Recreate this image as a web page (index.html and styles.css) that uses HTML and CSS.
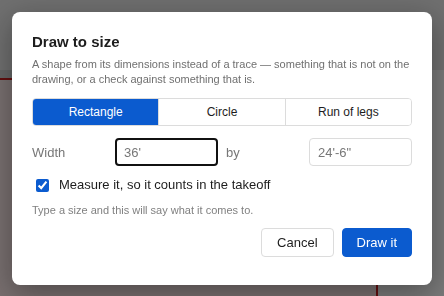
FILE: index.html
```html
<!DOCTYPE html>
<html>
<head>
<meta charset="UTF-8">
<title>Draw to size</title>
<link rel="stylesheet" href="styles.css">
</head>
<body>
	<!-- the takeoff page behind the dialog -->
	<div class="app">
		<div class="app-head"></div>
		<div class="app-body">
			<div class="work">
				<div class="toolbar"></div>
				<div class="sheet"></div>
			</div>
			<div class="side"></div>
		</div>
	</div>

	<div class="backdrop">
		<div class="dialog">
			<h1 class="title">Draw to size</h1>
			<p class="lead">A shape from its dimensions instead of a trace — something that is not on the drawing, or a check against something that is.</p>

			<div class="seg">
				<button class="seg-btn on">Rectangle</button>
				<button class="seg-btn">Circle</button>
				<button class="seg-btn">Run of legs</button>
			</div>

			<div class="dims">
				<label class="dim-label" for="w">Width</label>
				<input class="dim focus" id="w" value="36'">
				<label class="dim-label" for="h">by</label>
				<input class="dim" id="h" placeholder="24'-6&quot;">
			</div>

			<label class="check">
				<input type="checkbox" checked>
				<span>Measure it, so it counts in the takeoff</span>
			</label>

			<p class="hint">Type a size and this will say what it comes to.</p>

			<div class="actions">
				<button class="btn">Cancel</button>
				<button class="btn primary">Draw it</button>
			</div>
		</div>
	</div>
</body>
</html>
```

FILE: styles.css
```css
/* page behind the dialog */
html, body {
	margin: 0;
	height: 100%;
	overflow: hidden;
}

body {
	font-family: "Liberation Sans", Arial, sans-serif;
	background: #e4e4e4;
}

.app {
	height: 100%;
	display: flex;
	flex-direction: column;
}

.app-head {
	height: 70px;
	background: #dedede;
}

.app-body {
	flex: 1;
	display: flex;
}

.work {
	width: 378px;
	display: flex;
	flex-direction: column;
}

.toolbar {
	height: 8px;
	background: #c9cccc;
}

.sheet {
	flex: 1;
	background: #f0dede;
	border-top: 2px solid #c41e1e;
	border-right: 2px solid #c41e1e;
}

.side {
	flex: 1;
	background: #f2f2f2;
}

/* dialog */
.backdrop {
	position: fixed;
	inset: 0;
	background: rgba(0, 0, 0, 0.5);
	display: flex;
	align-items: flex-start;
	justify-content: center;
	padding-top: 12px;
}

.dialog {
	width: 380px;
	padding: 20px 20px 28px;
	background: white;
	border-radius: 8px;
	box-shadow: 0 8px 30px rgba(0, 0, 0, 0.35);
}

.title {
	margin: 0 0 5px;
	font-size: 15px;
	line-height: 20px;
	font-weight: bold;
	color: #1d1d1d;
}

.lead {
	margin: 0 0 11px;
	font-size: 11px;
	line-height: 15px;
	color: #707070;
}

.seg {
	display: flex;
	border: 1px solid #dcdcdc;
	border-radius: 4px;
	overflow: hidden;
}

.seg-btn {
	flex: 1;
	height: 26px;
	border: 0;
	border-left: 1px solid #dcdcdc;
	background: white;
	font-family: inherit;
	font-size: 12px;
	color: #1d1d1d;
	padding: 0;
}

.seg-btn:first-child {
	border-left: 0;
}

.seg-btn.on {
	background: #0b5bcf;
	color: white;
}

.dims {
	display: grid;
	grid-template-columns: 75px 1fr 75px 1fr;
	gap: 8px;
	align-items: center;
	margin-top: 12px;
}

.dim-label {
	font-size: 13px;
	color: #777;
}

.dim {
	box-sizing: border-box;
	width: 100%;
	height: 28px;
	padding: 0 8px;
	border: 1px solid #dcdcdc;
	border-radius: 4px;
	font-family: inherit;
	font-size: 13px;
	color: #777;
	outline: none;
}

.dim::placeholder {
	color: #777;
}

.dim.focus {
	border: 2px solid #111;
	padding: 0 7px;
}

.check {
	display: flex;
	align-items: center;
	gap: 10px;
	margin-top: 11px;
	padding-left: 4px;
	font-size: 13px;
	line-height: 16px;
	color: #1d1d1d;
}

.check input {
	margin: 0;
	width: 13px;
	height: 13px;
	accent-color: #0b5bcf;
}

.hint {
	margin: 10px 0 0;
	font-size: 11px;
	line-height: 15px;
	color: #808080;
}

.actions {
	display: flex;
	justify-content: flex-end;
	gap: 8px;
	margin-top: 10px;
}

.btn {
	height: 29px;
	padding: 0 15px;
	border: 1px solid #dcdcdc;
	border-radius: 4px;
	background: white;
	font-family: inherit;
	font-size: 13px;
	color: #1d1d1d;
}

.btn.primary {
	background: #0b5bcf;
	border-color: #0b5bcf;
	color: white;
	padding: 0 14px;
}
```
